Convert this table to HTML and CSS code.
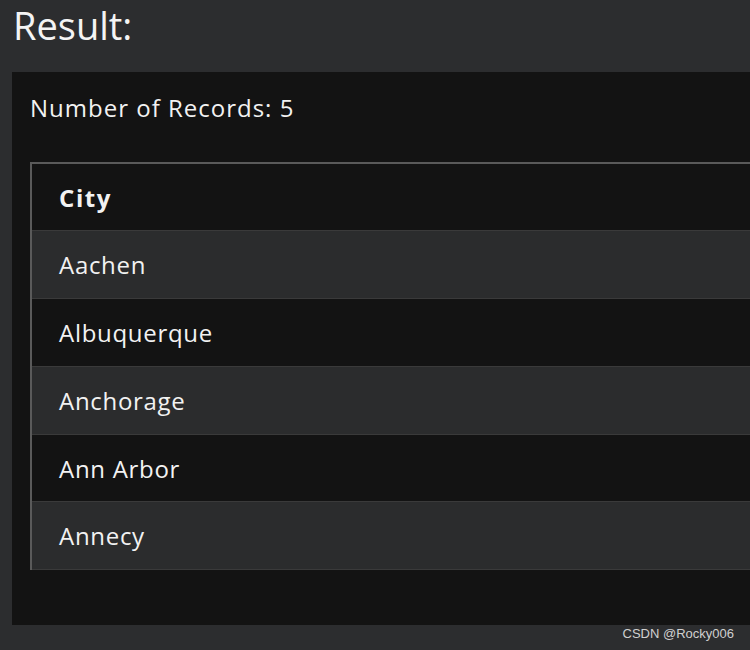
FILE: index.html
```html
<!DOCTYPE html>
<html>
<head>
<meta charset="utf-8">
<link rel="stylesheet" href="styles.css">
</head>
<body>
<h1 class="title">Result:</h1>
<div class="panel">
  <p class="count">Number of Records: 5</p>
  <table class="grid">
    <thead>
      <tr><th>City</th></tr>
    </thead>
    <tbody>
      <tr class="alt"><td>Aachen</td></tr>
      <tr><td>Albuquerque</td></tr>
      <tr class="alt"><td>Anchorage</td></tr>
      <tr><td>Ann Arbor</td></tr>
      <tr class="alt"><td>Annecy</td></tr>
    </tbody>
  </table>
</div>
<div class="mark">CSDN @Rocky006</div>
</body>
</html>
```
FILE: styles.css
```css
html, body {
  margin: 0;
  padding: 0;
  background: #2c2d2f;
  width: 750px;
  height: 650px;
  overflow: hidden;
  font-family: "Open Sans", "DejaVu Sans", sans-serif;
  color: #f2f2f2;
  position: relative;
}
.title {
  margin: 0;
  height: 72px;
  padding-left: 13px;
  font-size: 38px;
  font-weight: 400;
  line-height: 50px;
  color: #f4f4f4;
}
.panel {
  margin-left: 12px;
  background: #131313;
  height: 553px;
  padding: 0 0 0 18px;
  box-sizing: border-box;
  overflow: hidden;
}
.count {
  margin: 0;
  height: 90px;
  line-height: 72px;
  font-size: 24px;
  letter-spacing: 1px;
}
.grid {
  border-collapse: collapse;
  width: 760px;
  border-top: 2px solid #5a5a5a;
  border-left: 2px solid #5a5a5a;
}
.grid th, .grid td {
  text-align: left;
  height: 67.8px;
  padding: 0 0 0 27px;
  font-size: 24px;
  letter-spacing: 0.7px;
  border-bottom: 1px solid #3a3a3a;
  box-sizing: border-box;
}
.grid th {
  font-weight: 700;
  letter-spacing: 1.6px;
}
.grid td {
  font-weight: 400;
}
.alt {
  background: #2b2c2d;
}
.mark {
  position: absolute;
  right: 16px;
  bottom: 9px;
  font-family: "Liberation Sans", Arial, sans-serif;
  font-size: 13px;
  color: #d0d0d0;
}
```
